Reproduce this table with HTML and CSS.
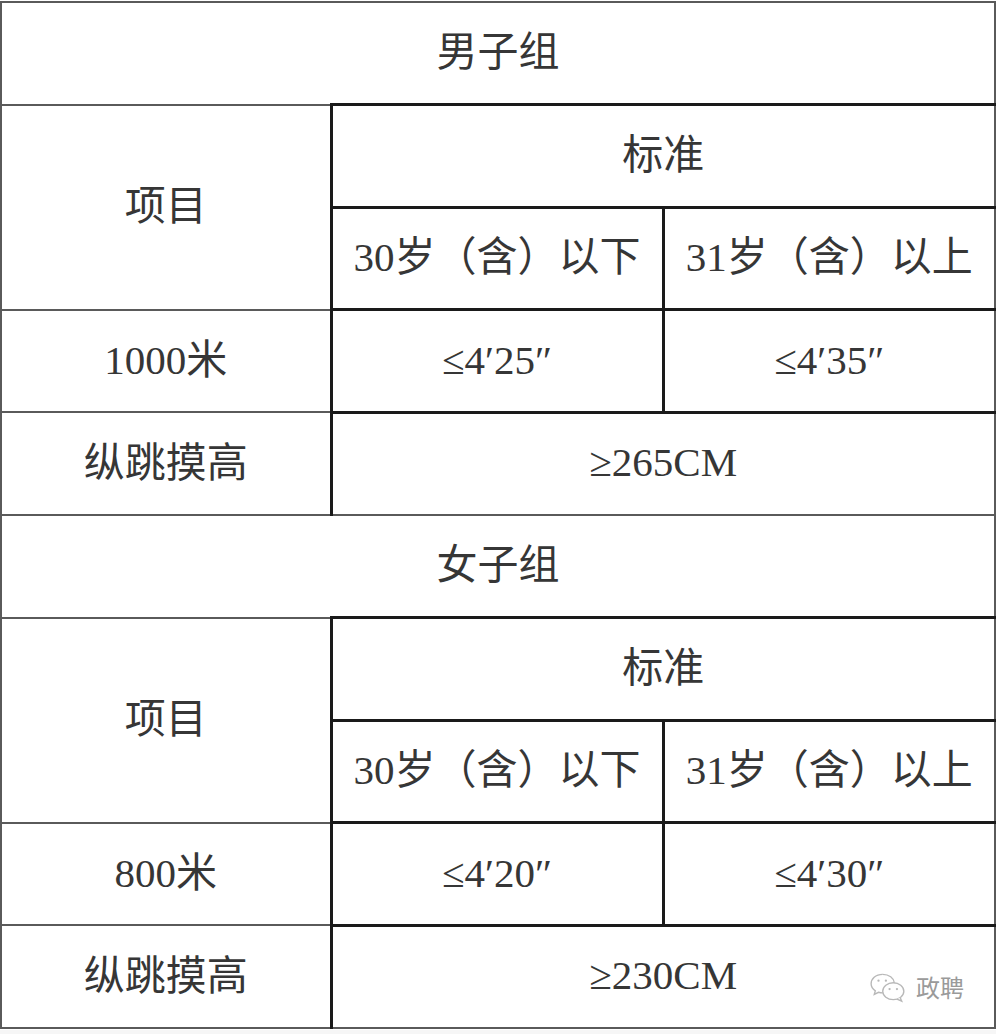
FILE: index.html
```html
<!DOCTYPE html>
<html lang="zh">
<head>
<meta charset="utf-8">
<link rel="stylesheet" href="styles.css">
</head>
<body>
<div class="wrap">
<table class="std">
  <colgroup><col class="c1"><col class="c2"><col class="c3"></colgroup>
  <tr><td colspan="3" class="cjk">男子组</td></tr>
  <tr><td rowspan="2" class="cjk">项目</td><td colspan="2" class="cjk dark">标准</td></tr>
  <tr><td class="mix dark">30岁（含）以下</td><td class="mix dark">31岁（含）以上</td></tr>
  <tr><td class="mix">1000米</td><td class="ser dark">≤4′25″</td><td class="ser dark">≤4′35″</td></tr>
  <tr><td class="cjk">纵跳摸高</td><td colspan="2" class="ser dark">≥265CM</td></tr>
  <tr><td colspan="3" class="cjk">女子组</td></tr>
  <tr><td rowspan="2" class="cjk">项目</td><td colspan="2" class="cjk dark">标准</td></tr>
  <tr><td class="mix dark">30岁（含）以下</td><td class="mix dark">31岁（含）以上</td></tr>
  <tr><td class="mix">800米</td><td class="ser dark">≤4′20″</td><td class="ser dark">≤4′30″</td></tr>
  <tr><td class="cjk">纵跳摸高</td><td colspan="2" class="ser dark">≥230CM</td></tr>
</table>
<div class="mark">
  <svg class="wx" width="38" height="32" viewBox="0 0 36 30">
    <path d="M13 3 C6 3 2 7.5 2 12 C2 14.8 3.5 17 6 18.6 L5 22 L9 20 C10.3 20.4 11.6 20.6 13 20.6" fill="none" stroke="#b8b8b8" stroke-width="1.3"/>
    <path d="M13 3 C19 3 23.5 6.5 24 11" fill="none" stroke="#b8b8b8" stroke-width="1.3"/>
    <ellipse cx="23" cy="19" rx="10" ry="8" fill="#fff" stroke="#b8b8b8" stroke-width="1.3"/>
    <path d="M29.5 25 L31 28.5 L26.5 26.5" fill="#fff" stroke="#b8b8b8" stroke-width="1.3"/>
    <circle cx="9" cy="9" r="1.1" fill="#b8b8b8"/>
    <circle cx="16" cy="9" r="1.1" fill="#b8b8b8"/>
    <circle cx="19.5" cy="17" r="1.1" fill="#b8b8b8"/>
    <circle cx="26.5" cy="17" r="1.1" fill="#b8b8b8"/>
  </svg>
  <span class="mtext">政聘</span>
</div>
</div>
</body>
</html>
```
FILE: styles.css
```css
html, body {
  margin: 0;
  padding: 0;
  background: #ffffff;
}
.wrap {
  position: relative;
  width: 996px;
  height: 1034px;
  padding-top: 1px;
  box-sizing: border-box;
  border-bottom: 4px solid #f6f6f6;
}
.std {
  border-collapse: collapse;
  width: 994px;
  table-layout: fixed;
  color: #363636;
}
.c1 { width: 330px; }
.c2 { width: 332px; }
.c3 { width: 332px; }
.std tr { height: 102.6px; }
.std td {
  border: 2px solid #5a5a5a;
  text-align: center;
  vertical-align: middle;
  padding: 0 0 9px 0;
  font-size: 41px;
  line-height: 1;
}
.std td.mix,
.std td.ser {
  padding-bottom: 2px;
}
.std td.dark {
  border-left: 3px solid #1a1a1a;
  border-top: 3px solid #1a1a1a;
}
.cjk {
  font-family: "Noto Sans CJK SC", "Noto Sans", sans-serif;
  font-weight: 400;
}
.mix {
  font-family: "Liberation Serif", "Noto Sans CJK SC", serif;
}
.ser {
  font-family: "Liberation Serif", "Times New Roman", serif;
}
.mark {
  position: absolute;
  left: 869px;
  top: 971px;
  display: flex;
  align-items: center;
  gap: 9px;
}
.mtext {
  font-family: "Noto Sans CJK SC", sans-serif;
  font-size: 24px;
  color: #9a9a9a;
  line-height: 1;
}
```
